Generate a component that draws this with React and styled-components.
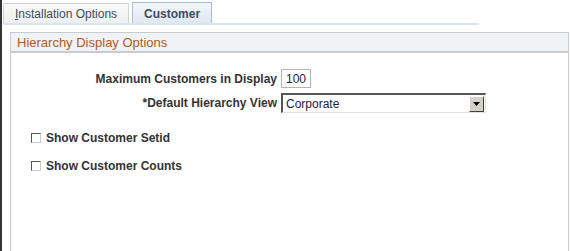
import React from 'react';
import styled, { createGlobalStyle } from 'styled-components';

const GlobalStyle = createGlobalStyle`
  html, body {
    margin: 0;
    padding: 0;
    background: #fff;
  }
  body {
    font-family: Arial, 'Liberation Sans', sans-serif;
  }
`;

const Page = styled.div`
  width: 570px;
  height: 251px;
  box-sizing: border-box;
  border-left: 2px solid #333;
  overflow: hidden;
  padding: 2px 0 0 1px;
`;

const TabBar = styled.div`
  display: flex;
  align-items: flex-end;
  gap: 3px;
  width: 476px;
  height: 21px;
  border-bottom: 2px solid #dbe4ef;
`;

const Tab = styled.div`
  box-sizing: border-box;
  height: ${(p) => (p.active ? '21px' : '20px')};
  padding: 1px 11px 0;
  display: flex;
  align-items: center;
  font-size: 12px;
  font-weight: ${(p) => (p.active ? 'bold' : 'normal')};
  color: #3d4b5c;
  background: ${(p) =>
    p.active ? 'linear-gradient(#f2f6fb, #dfe8f2)' : 'linear-gradient(#fafafa, #efefef)'};
  border: 1px solid ${(p) => (p.active ? '#adbccf' : '#cfd4da')};
  border-bottom: none;

  u {
    text-decoration: underline;
  }
`;

const Section = styled.div`
  margin: 7px 0 0 7px;
  width: 559px;
  height: 230px;
  box-sizing: border-box;
  border: 1px solid #c8cad0;
`;

const SectionHeader = styled.div`
  height: 18px;
  background: #eff3f5;
  border-bottom: 2px solid #c8cad0;
  padding-left: 6px;
  display: flex;
  align-items: center;
  font-size: 13px;
  color: #b4581f;
`;

const Body = styled.div`
  display: flex;
  flex-direction: column;
  padding-top: 16px;
`;

const FieldRow = styled.div`
  display: grid;
  grid-template-columns: 266px auto;
  align-items: center;
  column-gap: 4px;
  margin-bottom: ${(p) => p.gap || 0}px;
`;

const Label = styled.label`
  text-align: right;
  font-size: 12px;
  font-weight: bold;
  color: #333;
`;

const NumberBox = styled.div`
  box-sizing: border-box;
  width: 30px;
  height: 19px;
  border: 1px solid #b0b4b8;
  font-size: 12px;
  color: #1c1c3a;
  display: flex;
  align-items: center;
  padding-left: 4px;
`;

const SelectBox = styled.div`
  box-sizing: border-box;
  width: 205px;
  height: 20px;
  display: flex;
  align-items: center;
  border-top: 2px solid #555;
  border-left: 2px solid #555;
  border-right: 1px solid #e4e4e4;
  border-bottom: 1px solid #e4e4e4;
  font-size: 12px;
  color: #1c1c3a;
  padding-left: 3px;
  justify-content: space-between;
`;

const DropButton = styled.div`
  box-sizing: border-box;
  width: 15px;
  height: 16px;
  margin-right: 1px;
  background: #d4d0c8;
  border-top: 1px solid #fff;
  border-left: 1px solid #fff;
  border-right: 1px solid #404040;
  border-bottom: 1px solid #404040;
  display: flex;
  align-items: center;
  justify-content: center;
`;

const CheckRow = styled.div`
  display: flex;
  align-items: center;
  gap: 5px;
  padding-left: 20px;
  margin-top: ${(p) => p.top}px;
  font-size: 12px;
  font-weight: bold;
  color: #333;
`;

const CheckBox = styled.span`
  box-sizing: border-box;
  width: 10px;
  height: 10px;
  border-top: 1px solid #555;
  border-left: 1px solid #555;
  border-right: 1px solid #ccc;
  border-bottom: 1px solid #ccc;
  background: #fff;
`;

export default function App() {
  return (
    <Page>
      <GlobalStyle />
      <TabBar>
        <Tab>
          <span>
            <u>I</u>nstallation Options
          </span>
        </Tab>
        <Tab active>Customer</Tab>
      </TabBar>
      <Section>
        <SectionHeader>Hierarchy Display Options</SectionHeader>
        <Body>
          <FieldRow gap={5}>
            <Label>Maximum Customers in Display</Label>
            <NumberBox>100</NumberBox>
          </FieldRow>
          <FieldRow>
            <Label>*Default Hierarchy View</Label>
            <SelectBox>
              <span>Corporate</span>
              <DropButton>
                <svg width="7" height="4" viewBox="0 0 7 4">
                  <path d="M0 0h7L3.5 4z" fill="#000" />
                </svg>
              </DropButton>
            </SelectBox>
          </FieldRow>
          <CheckRow top={18}>
            <CheckBox />
            <span>Show Customer Setid</span>
          </CheckRow>
          <CheckRow top={14}>
            <CheckBox />
            <span>Show Customer Counts</span>
          </CheckRow>
        </Body>
      </Section>
    </Page>
  );
}
